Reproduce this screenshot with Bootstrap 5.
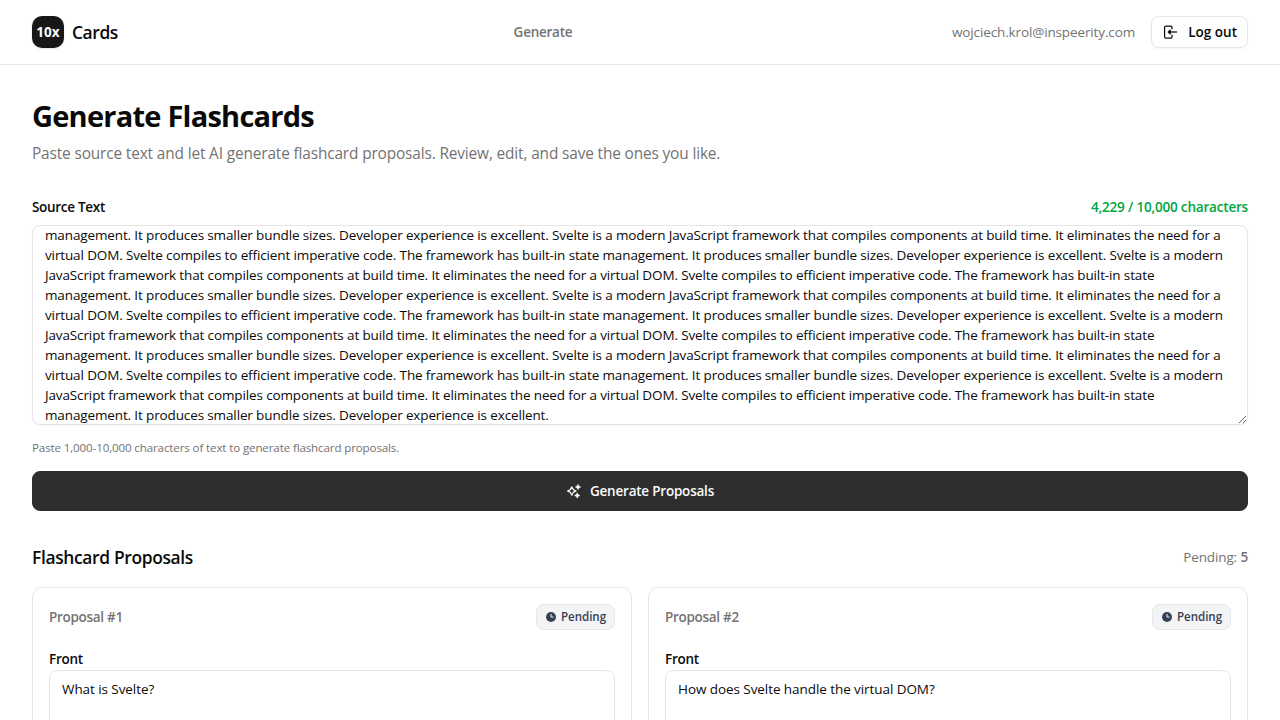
<!DOCTYPE html>
<html lang="en">
<head>
<meta charset="utf-8">
<meta name="viewport" content="width=device-width, initial-scale=1">
<title>10x Cards</title>
<link href="https://cdn.jsdelivr.net/npm/bootstrap@5.3.0/dist/css/bootstrap.min.css" rel="stylesheet">
<style>
  :root { --line: #e5e5e5; --muted: #737373; --ink: #0a0a0a; }
  html { overflow: hidden; }
  body { font-family: "Open Sans", sans-serif; font-size: 13.5px; line-height: 20px; color: var(--ink); letter-spacing: -.13px; height: 720px; overflow: hidden; }
  .topbar { height: 65px; border-bottom: 1px solid var(--line); }
  .topnav { margin-left: 16px; letter-spacing: -.25px; }
  .logo { width: 32px; height: 32px; border-radius: 10px; background: #171717; color: #fafafa; font-weight: 700; letter-spacing: .1px; box-shadow: 0 1px 2px rgba(0,0,0,.12); }
  .brand { font-size: 17.4px; letter-spacing: -.4px; }
  .muted { color: var(--muted); }
  .semi { font-weight: 600; }
  .btn-out { --bs-btn-font-size: 13.5px; --bs-btn-font-weight: 600; --bs-btn-color: var(--ink); --bs-btn-border-color: var(--line); --bs-btn-border-radius: 8px; --bs-btn-padding-x: 10px; --bs-btn-padding-y: 0; height: 32px; width: 97px; letter-spacing: 0; box-shadow: 0 1px 2px rgba(0,0,0,.05); }
  main { padding-top: 33px; }
  .page-title { font-size: 29px; line-height: 36px; font-weight: 700; letter-spacing: -.76px; }
  .lede { margin-top: 8px; font-size: 15.4px; line-height: 24px; letter-spacing: -.138px; }
  .labels { margin-top: 31px; margin-bottom: 8px; letter-spacing: -.3px; }
  .count { color: #00a63e; letter-spacing: -.185px; }
  .field { display: block; width: 100%; border: 1px solid var(--line); border-radius: 8px; padding: 8px 12px; font-size: 13.5px; line-height: 20px; color: var(--ink); letter-spacing: -.07px; overflow: hidden; resize: vertical; background: #fff; box-shadow: 0 1px 2px rgba(0,0,0,.03); }
  .source { height: 200px; padding: 0 12px; letter-spacing: -.13px; white-space: pre; }
  .hint { margin-top: 15px; font-size: 11.6px; line-height: 16px; letter-spacing: -.14px; }
  .btn-main { --bs-btn-bg: #2e2e2e; --bs-btn-border-color: #2e2e2e; --bs-btn-color: #fafafa; --bs-btn-font-size: 13.5px; --bs-btn-font-weight: 600; --bs-btn-border-radius: 8px; margin-top: 15px; height: 40px; letter-spacing: -.22px; }
  .section-head { margin-top: 32px; margin-bottom: 16px; }
  .section-title { font-size: 17.4px; line-height: 28px; font-weight: 600; letter-spacing: -.34px; }
  .proposal { --bs-card-border-color: var(--line); --bs-card-border-radius: 10px; --bs-card-spacer-x: 16px; --bs-card-spacer-y: 16px; }
  .number { letter-spacing: -.3px; }
  .status { height: 26px; width: 79px; border: 1px solid #e5e7eb; border-radius: 8px; background: #f3f4f6; color: #364153; font-size: 11.6px; letter-spacing: -.06px; }
  .front { margin-top: 19px; margin-bottom: 1px; letter-spacing: -.24px; }
  .answer { height: 60px; }
</style>
</head>
<body>
<header class="topbar d-flex align-items-center justify-content-between px-4">
  <div class="d-flex align-items-center gap-2 ps-2">
    <span class="logo d-flex align-items-center justify-content-center">10x</span>
    <span class="brand semi">Cards</span>
  </div>
  <nav class="topnav muted semi">Generate</nav>
  <div class="d-flex align-items-center gap-3 pe-2">
    <span class="muted">wojciech.krol@inspeerity.com</span>
    <button class="btn btn-out d-flex align-items-center justify-content-between" type="button">
      <svg width="16" height="16" viewBox="0 0 16 16" fill="none" stroke="currentColor" stroke-width="1.25" stroke-linejoin="round"><path d="M10 5.2V3.3a1.3 1.3 0 0 0-1.3-1.3H3.9a1.3 1.3 0 0 0-1.3 1.3v9.4A1.3 1.3 0 0 0 3.900 14h4.800a1.300 1.300 0 0 0 1.300-1.300v-1.900"/><path d="M15 8H7"/><path d="M8.200 6.200 6.300 8l1.900 1.800z" fill="currentColor"/></svg>
      <span>Log out</span>
    </button>
  </div>
</header>
<main class="px-4 mx-2">
  <h1 class="page-title mb-0">Generate Flashcards</h1>
  <p class="lede muted mb-0">Paste source text and let AI generate flashcard proposals. Review, edit, and save the ones you like.</p>
  <div class="labels d-flex justify-content-between semi">
    <label for="src">Source Text</label>
    <span class="count">4,229 / 10,000 characters</span>
  </div>
  <textarea id="src" class="field source" spellcheck="false">management. It produces smaller bundle sizes. Developer experience is excellent. Svelte is a modern JavaScript framework that compiles components at build time. It eliminates the need for a
virtual DOM. Svelte compiles to efficient imperative code. The framework has built-in state management. It produces smaller bundle sizes. Developer experience is excellent. Svelte is a modern
JavaScript framework that compiles components at build time. It eliminates the need for a virtual DOM. Svelte compiles to efficient imperative code. The framework has built-in state
management. It produces smaller bundle sizes. Developer experience is excellent. Svelte is a modern JavaScript framework that compiles components at build time. It eliminates the need for a
virtual DOM. Svelte compiles to efficient imperative code. The framework has built-in state management. It produces smaller bundle sizes. Developer experience is excellent. Svelte is a modern
JavaScript framework that compiles components at build time. It eliminates the need for a virtual DOM. Svelte compiles to efficient imperative code. The framework has built-in state
management. It produces smaller bundle sizes. Developer experience is excellent. Svelte is a modern JavaScript framework that compiles components at build time. It eliminates the need for a
virtual DOM. Svelte compiles to efficient imperative code. The framework has built-in state management. It produces smaller bundle sizes. Developer experience is excellent. Svelte is a modern
JavaScript framework that compiles components at build time. It eliminates the need for a virtual DOM. Svelte compiles to efficient imperative code. The framework has built-in state
management. It produces smaller bundle sizes. Developer experience is excellent.</textarea>
  <p class="hint muted mb-0">Paste 1,000-10,000 characters of text to generate flashcard proposals.</p>
  <button class="btn btn-main w-100 d-flex align-items-center justify-content-center gap-2" type="button">
    <svg width="16" height="16" viewBox="0 0 16 16" fill="none" stroke="currentColor" stroke-width="1.2" stroke-linejoin="round"><path d="M5.800 3.800 7.200 6.600 10 8 7.200 9.400 5.800 12.200 4.400 9.400 1.600 8 4.400 6.600z"/><path fill="currentColor" stroke-width=".5" d="m12 1.300.9 1.800 1.800.9-1.800.9-.9 1.800-.9-1.800L9.300 4l1.800-.9zM11.200 9.800l.9 1.800 1.800.9-1.800.9-.9 1.800-.9-1.800-1.800-.9 1.800-.9z"/></svg>
    <span>Generate Proposals</span>
  </button>
  <div class="section-head d-flex justify-content-between align-items-center">
    <h2 class="section-title mb-0">Flashcard Proposals</h2>
    <span class="muted">Pending: <span class="semi">5</span></span>
  </div>
  <div class="row gx-3">
    <div class="col-6">
      <article class="card proposal"><div class="card-body">
        <div class="d-flex justify-content-between align-items-center">
          <span class="number muted semi">Proposal #1</span>
          <span class="status semi d-flex align-items-center justify-content-center gap-1"><svg width="12" height="12" viewBox="0 0 12 12"><circle cx="6" cy="6" r="5" fill="currentColor"/><path d="M6 3v3h2.500" fill="none" stroke="#f3f4f6"/></svg>Pending</span>
        </div>
        <label class="front semi d-block" for="f1">Front</label>
        <textarea id="f1" class="field answer" spellcheck="false">What is Svelte?</textarea>
      </div></article>
    </div>
    <div class="col-6">
      <article class="card proposal"><div class="card-body">
        <div class="d-flex justify-content-between align-items-center">
          <span class="number muted semi">Proposal #2</span>
          <span class="status semi d-flex align-items-center justify-content-center gap-1"><svg width="12" height="12" viewBox="0 0 12 12"><circle cx="6" cy="6" r="5" fill="currentColor"/><path d="M6 3v3h2.500" fill="none" stroke="#f3f4f6"/></svg>Pending</span>
        </div>
        <label class="front semi d-block" for="f2">Front</label>
        <textarea id="f2" class="field answer" spellcheck="false">How does Svelte handle the virtual DOM?</textarea>
      </div></article>
    </div>
  </div>
</main>
<script src="https://cdn.jsdelivr.net/npm/bootstrap@5.3.0/dist/js/bootstrap.bundle.min.js"></script>
<script>document.getElementById('src').scrollTop = 1;</script>
</body>
</html>
